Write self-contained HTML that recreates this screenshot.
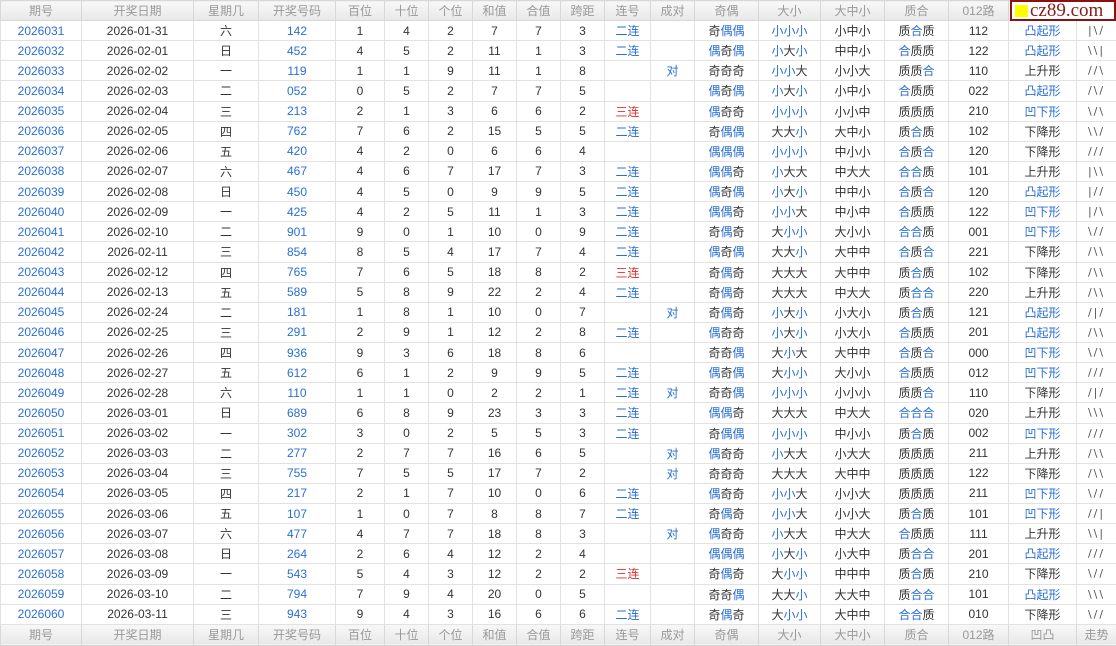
<!DOCTYPE html>
<html><head><meta charset="utf-8"><style>
body{margin:0;background:#fff;width:1116px;height:645px;overflow:hidden;position:relative}
table{border-collapse:collapse;table-layout:fixed;width:1116px;font-family:"Liberation Sans","Noto Sans CJK SC",sans-serif;font-size:12px;color:#333}
td,th{border:1px solid #e2e2e2;padding:0;text-align:center;white-space:nowrap;overflow:hidden}
tr{height:20.13px}
thead tr{height:20px}tfoot tr{height:21px}
th{font-weight:normal;color:#999;background:linear-gradient(#f8f8f8,#e8e8e8);border-color:#d8d8d8}
b{font-weight:normal;color:#2a6fd6}
.b{color:#2a6fd6}.r{color:#e03030}
td:last-child{letter-spacing:2px;font-family:"DejaVu Sans",sans-serif;font-size:11px;color:#555}
#logo{position:absolute;left:1010px;top:0;width:102px;height:17px;border:2px solid #8b1010;background:#fff;font-family:"Liberation Serif",serif;font-size:19px;color:#8b1a1a;line-height:17px}
#logo i{display:inline-block;width:13px;height:12px;background:#ffff00;margin:0 2px 0 3px;vertical-align:-1px}
</style></head><body>
<table>
<colgroup><col style="width:81px"><col style="width:112px"><col style="width:65px"><col style="width:77px"><col style="width:49px"><col style="width:44px"><col style="width:44px"><col style="width:44px"><col style="width:44px"><col style="width:44px"><col style="width:46px"><col style="width:44px"><col style="width:64px"><col style="width:62px"><col style="width:64px"><col style="width:64px"><col style="width:60px"><col style="width:68px"><col style="width:40px"></colgroup>
<thead><tr><th>期号</th><th>开奖日期</th><th>星期几</th><th>开奖号码</th><th>百位</th><th>十位</th><th>个位</th><th>和值</th><th>合值</th><th>跨距</th><th>连号</th><th>成对</th><th>奇偶</th><th>大小</th><th>大中小</th><th>质合</th><th>012路</th><th>凹凸</th><th>走势</th></tr></thead>
<tbody>
<tr><td class="b">2026031</td><td>2026-01-31</td><td>六</td><td class="b">142</td><td>1</td><td>4</td><td>2</td><td>7</td><td>7</td><td>3</td><td class="b">二连</td><td></td><td>奇<b>偶偶</b></td><td><b>小小小</b></td><td>小中小</td><td>质<b>合</b>质</td><td>112</td><td class="b">凸起形</td><td>|\/</td></tr>
<tr><td class="b">2026032</td><td>2026-02-01</td><td>日</td><td class="b">452</td><td>4</td><td>5</td><td>2</td><td>11</td><td>1</td><td>3</td><td class="b">二连</td><td></td><td><b>偶</b>奇<b>偶</b></td><td><b>小</b>大<b>小</b></td><td>中中小</td><td><b>合</b>质质</td><td>122</td><td class="b">凸起形</td><td>\\|</td></tr>
<tr><td class="b">2026033</td><td>2026-02-02</td><td>一</td><td class="b">119</td><td>1</td><td>1</td><td>9</td><td>11</td><td>1</td><td>8</td><td></td><td class="b">对</td><td>奇奇奇</td><td><b>小小</b>大</td><td>小小大</td><td>质质<b>合</b></td><td>110</td><td>上升形</td><td>//\</td></tr>
<tr><td class="b">2026034</td><td>2026-02-03</td><td>二</td><td class="b">052</td><td>0</td><td>5</td><td>2</td><td>7</td><td>7</td><td>5</td><td></td><td></td><td><b>偶</b>奇<b>偶</b></td><td><b>小</b>大<b>小</b></td><td>小中小</td><td><b>合</b>质质</td><td>022</td><td class="b">凸起形</td><td>/\/</td></tr>
<tr><td class="b">2026035</td><td>2026-02-04</td><td>三</td><td class="b">213</td><td>2</td><td>1</td><td>3</td><td>6</td><td>6</td><td>2</td><td class="r">三连</td><td></td><td><b>偶</b>奇奇</td><td><b>小小小</b></td><td>小小中</td><td>质质质</td><td>210</td><td class="b">凹下形</td><td>\/\</td></tr>
<tr><td class="b">2026036</td><td>2026-02-05</td><td>四</td><td class="b">762</td><td>7</td><td>6</td><td>2</td><td>15</td><td>5</td><td>5</td><td class="b">二连</td><td></td><td>奇<b>偶偶</b></td><td>大大<b>小</b></td><td>大中小</td><td>质<b>合</b>质</td><td>102</td><td>下降形</td><td>\\/</td></tr>
<tr><td class="b">2026037</td><td>2026-02-06</td><td>五</td><td class="b">420</td><td>4</td><td>2</td><td>0</td><td>6</td><td>6</td><td>4</td><td></td><td></td><td><b>偶偶偶</b></td><td><b>小小小</b></td><td>中小小</td><td><b>合</b>质<b>合</b></td><td>120</td><td>下降形</td><td>///</td></tr>
<tr><td class="b">2026038</td><td>2026-02-07</td><td>六</td><td class="b">467</td><td>4</td><td>6</td><td>7</td><td>17</td><td>7</td><td>3</td><td class="b">二连</td><td></td><td><b>偶偶</b>奇</td><td><b>小</b>大大</td><td>中大大</td><td><b>合合</b>质</td><td>101</td><td>上升形</td><td>|\\</td></tr>
<tr><td class="b">2026039</td><td>2026-02-08</td><td>日</td><td class="b">450</td><td>4</td><td>5</td><td>0</td><td>9</td><td>9</td><td>5</td><td class="b">二连</td><td></td><td><b>偶</b>奇<b>偶</b></td><td><b>小</b>大<b>小</b></td><td>中中小</td><td><b>合</b>质<b>合</b></td><td>120</td><td class="b">凸起形</td><td>|//</td></tr>
<tr><td class="b">2026040</td><td>2026-02-09</td><td>一</td><td class="b">425</td><td>4</td><td>2</td><td>5</td><td>11</td><td>1</td><td>3</td><td class="b">二连</td><td></td><td><b>偶偶</b>奇</td><td><b>小小</b>大</td><td>中小中</td><td><b>合</b>质质</td><td>122</td><td class="b">凹下形</td><td>|/\</td></tr>
<tr><td class="b">2026041</td><td>2026-02-10</td><td>二</td><td class="b">901</td><td>9</td><td>0</td><td>1</td><td>10</td><td>0</td><td>9</td><td class="b">二连</td><td></td><td>奇<b>偶</b>奇</td><td>大<b>小小</b></td><td>大小小</td><td><b>合合</b>质</td><td>001</td><td class="b">凹下形</td><td>\//</td></tr>
<tr><td class="b">2026042</td><td>2026-02-11</td><td>三</td><td class="b">854</td><td>8</td><td>5</td><td>4</td><td>17</td><td>7</td><td>4</td><td class="b">二连</td><td></td><td><b>偶</b>奇<b>偶</b></td><td>大大<b>小</b></td><td>大中中</td><td><b>合</b>质<b>合</b></td><td>221</td><td>下降形</td><td>/\\</td></tr>
<tr><td class="b">2026043</td><td>2026-02-12</td><td>四</td><td class="b">765</td><td>7</td><td>6</td><td>5</td><td>18</td><td>8</td><td>2</td><td class="r">三连</td><td></td><td>奇<b>偶</b>奇</td><td>大大大</td><td>大中中</td><td>质<b>合</b>质</td><td>102</td><td>下降形</td><td>/\\</td></tr>
<tr><td class="b">2026044</td><td>2026-02-13</td><td>五</td><td class="b">589</td><td>5</td><td>8</td><td>9</td><td>22</td><td>2</td><td>4</td><td class="b">二连</td><td></td><td>奇<b>偶</b>奇</td><td>大大大</td><td>中大大</td><td>质<b>合合</b></td><td>220</td><td>上升形</td><td>/\\</td></tr>
<tr><td class="b">2026045</td><td>2026-02-24</td><td>二</td><td class="b">181</td><td>1</td><td>8</td><td>1</td><td>10</td><td>0</td><td>7</td><td></td><td class="b">对</td><td>奇<b>偶</b>奇</td><td><b>小</b>大<b>小</b></td><td>小大小</td><td>质<b>合</b>质</td><td>121</td><td class="b">凸起形</td><td>/|/</td></tr>
<tr><td class="b">2026046</td><td>2026-02-25</td><td>三</td><td class="b">291</td><td>2</td><td>9</td><td>1</td><td>12</td><td>2</td><td>8</td><td class="b">二连</td><td></td><td><b>偶</b>奇奇</td><td><b>小</b>大<b>小</b></td><td>小大小</td><td><b>合</b>质质</td><td>201</td><td class="b">凸起形</td><td>/\\</td></tr>
<tr><td class="b">2026047</td><td>2026-02-26</td><td>四</td><td class="b">936</td><td>9</td><td>3</td><td>6</td><td>18</td><td>8</td><td>6</td><td></td><td></td><td>奇奇<b>偶</b></td><td>大<b>小</b>大</td><td>大中中</td><td><b>合</b>质<b>合</b></td><td>000</td><td class="b">凹下形</td><td>\/\</td></tr>
<tr><td class="b">2026048</td><td>2026-02-27</td><td>五</td><td class="b">612</td><td>6</td><td>1</td><td>2</td><td>9</td><td>9</td><td>5</td><td class="b">二连</td><td></td><td><b>偶</b>奇<b>偶</b></td><td>大<b>小小</b></td><td>大小小</td><td><b>合</b>质质</td><td>012</td><td class="b">凹下形</td><td>///</td></tr>
<tr><td class="b">2026049</td><td>2026-02-28</td><td>六</td><td class="b">110</td><td>1</td><td>1</td><td>0</td><td>2</td><td>2</td><td>1</td><td class="b">二连</td><td class="b">对</td><td>奇奇<b>偶</b></td><td><b>小小小</b></td><td>小小小</td><td>质质<b>合</b></td><td>110</td><td>下降形</td><td>/|/</td></tr>
<tr><td class="b">2026050</td><td>2026-03-01</td><td>日</td><td class="b">689</td><td>6</td><td>8</td><td>9</td><td>23</td><td>3</td><td>3</td><td class="b">二连</td><td></td><td><b>偶偶</b>奇</td><td>大大大</td><td>中大大</td><td><b>合合合</b></td><td>020</td><td>上升形</td><td>\\\</td></tr>
<tr><td class="b">2026051</td><td>2026-03-02</td><td>一</td><td class="b">302</td><td>3</td><td>0</td><td>2</td><td>5</td><td>5</td><td>3</td><td class="b">二连</td><td></td><td>奇<b>偶偶</b></td><td><b>小小小</b></td><td>中小小</td><td>质<b>合</b>质</td><td>002</td><td class="b">凹下形</td><td>///</td></tr>
<tr><td class="b">2026052</td><td>2026-03-03</td><td>二</td><td class="b">277</td><td>2</td><td>7</td><td>7</td><td>16</td><td>6</td><td>5</td><td></td><td class="b">对</td><td><b>偶</b>奇奇</td><td><b>小</b>大大</td><td>小大大</td><td>质质质</td><td>211</td><td>上升形</td><td>/\\</td></tr>
<tr><td class="b">2026053</td><td>2026-03-04</td><td>三</td><td class="b">755</td><td>7</td><td>5</td><td>5</td><td>17</td><td>7</td><td>2</td><td></td><td class="b">对</td><td>奇奇奇</td><td>大大大</td><td>大中中</td><td>质质质</td><td>122</td><td>下降形</td><td>/\\</td></tr>
<tr><td class="b">2026054</td><td>2026-03-05</td><td>四</td><td class="b">217</td><td>2</td><td>1</td><td>7</td><td>10</td><td>0</td><td>6</td><td class="b">二连</td><td></td><td><b>偶</b>奇奇</td><td><b>小小</b>大</td><td>小小大</td><td>质质质</td><td>211</td><td class="b">凹下形</td><td>\//</td></tr>
<tr><td class="b">2026055</td><td>2026-03-06</td><td>五</td><td class="b">107</td><td>1</td><td>0</td><td>7</td><td>8</td><td>8</td><td>7</td><td class="b">二连</td><td></td><td>奇<b>偶</b>奇</td><td><b>小小</b>大</td><td>小小大</td><td>质<b>合</b>质</td><td>101</td><td class="b">凹下形</td><td>//|</td></tr>
<tr><td class="b">2026056</td><td>2026-03-07</td><td>六</td><td class="b">477</td><td>4</td><td>7</td><td>7</td><td>18</td><td>8</td><td>3</td><td></td><td class="b">对</td><td><b>偶</b>奇奇</td><td><b>小</b>大大</td><td>中大大</td><td><b>合</b>质质</td><td>111</td><td>上升形</td><td>\\|</td></tr>
<tr><td class="b">2026057</td><td>2026-03-08</td><td>日</td><td class="b">264</td><td>2</td><td>6</td><td>4</td><td>12</td><td>2</td><td>4</td><td></td><td></td><td><b>偶偶偶</b></td><td><b>小</b>大<b>小</b></td><td>小大中</td><td>质<b>合合</b></td><td>201</td><td class="b">凸起形</td><td>///</td></tr>
<tr><td class="b">2026058</td><td>2026-03-09</td><td>一</td><td class="b">543</td><td>5</td><td>4</td><td>3</td><td>12</td><td>2</td><td>2</td><td class="r">三连</td><td></td><td>奇<b>偶</b>奇</td><td>大<b>小小</b></td><td>中中中</td><td>质<b>合</b>质</td><td>210</td><td>下降形</td><td>\//</td></tr>
<tr><td class="b">2026059</td><td>2026-03-10</td><td>二</td><td class="b">794</td><td>7</td><td>9</td><td>4</td><td>20</td><td>0</td><td>5</td><td></td><td></td><td>奇奇<b>偶</b></td><td>大大<b>小</b></td><td>大大中</td><td>质<b>合合</b></td><td>101</td><td class="b">凸起形</td><td>\\\</td></tr>
<tr><td class="b">2026060</td><td>2026-03-11</td><td>三</td><td class="b">943</td><td>9</td><td>4</td><td>3</td><td>16</td><td>6</td><td>6</td><td class="b">二连</td><td></td><td>奇<b>偶</b>奇</td><td>大<b>小小</b></td><td>大中中</td><td><b>合合</b>质</td><td>010</td><td>下降形</td><td>\//</td></tr>
</tbody>
<tfoot><tr><th>期号</th><th>开奖日期</th><th>星期几</th><th>开奖号码</th><th>百位</th><th>十位</th><th>个位</th><th>和值</th><th>合值</th><th>跨距</th><th>连号</th><th>成对</th><th>奇偶</th><th>大小</th><th>大中小</th><th>质合</th><th>012路</th><th>凹凸</th><th>走势</th></tr></tfoot>
</table>
<div id="logo"><i></i>cz89.com</div>
</body></html>
